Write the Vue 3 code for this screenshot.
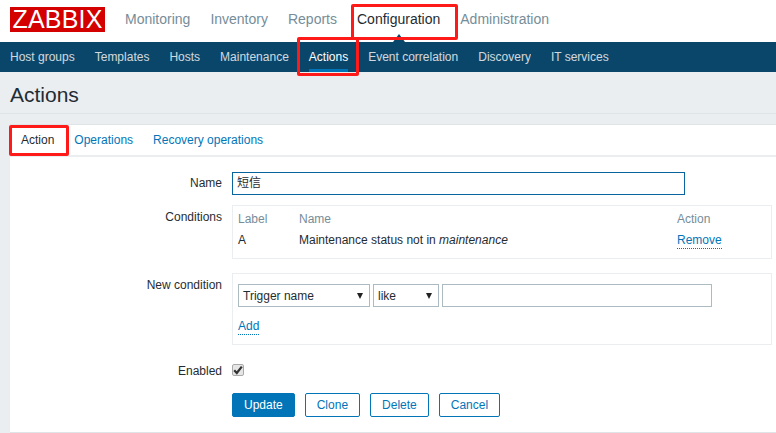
<script setup>
const mainMenu = ['Monitoring', 'Inventory', 'Reports', 'Configuration', 'Administration']
const subMenu = ['Host groups', 'Templates', 'Hosts', 'Maintenance', 'Actions', 'Event correlation', 'Discovery', 'IT services']
const tabs = ['Action', 'Operations', 'Recovery operations']
const buttons = ['Clone', 'Delete', 'Cancel']
</script>

<template>
  <div class="page">
    <header class="top">
      <div class="logo">ZABBIX</div>
      <nav class="main-menu">
        <a v-for="m in mainMenu" :key="m" :class="{ on: m === 'Configuration' }">{{ m }}</a>
      </nav>
    </header>
    <nav class="sub-menu">
      <a v-for="s in subMenu" :key="s" :class="{ on: s === 'Actions' }">{{ s }}</a>
    </nav>
    <h1 class="title">Actions</h1>

    <section class="card">
      <div class="tabs">
        <a v-for="t in tabs" :key="t" :class="{ on: t === 'Action' }">{{ t }}</a>
      </div>

      <div class="form">
        <div class="row row-name">
          <label>Name</label>
          <div class="input name-input">短信</div>
        </div>

        <div class="row row-cond">
          <label>Conditions</label>
          <div class="box cond-box">
            <div class="cond-line head"><span>Label</span><span>Name</span><span>Action</span></div>
            <div class="cond-line">
              <span>A</span>
              <span>Maintenance status not in <i>maintenance</i></span>
              <span><a class="link">Remove</a></span>
            </div>
          </div>
        </div>

        <div class="row row-new">
          <label>New condition</label>
          <div class="box new-box">
            <div class="fields">
              <div class="input select sel-a">Trigger name<span class="arrow"></span></div>
              <div class="input select sel-b">like<span class="arrow"></span></div>
              <div class="input text-field"></div>
            </div>
            <a class="link add">Add</a>
          </div>
        </div>

        <div class="row row-enabled">
          <label>Enabled</label>
          <div class="check">
            <svg width="10" height="10" viewBox="0 0 10 10"><path d="M1.2 5.2 L3.8 8 L8.8 1.6" fill="none" stroke="#333" stroke-width="2.2" /></svg>
          </div>
        </div>

        <div class="row row-btn">
          <span></span>
          <div class="btns">
            <button class="primary">Update</button>
            <button v-for="b in buttons" :key="b">{{ b }}</button>
          </div>
        </div>
      </div>
    </section>

    <!-- anotaciones rojas sobre la captura -->
    <div class="mark mark-config"></div>
    <div class="mark mark-actions"></div>
    <div class="mark mark-tab"></div>
  </div>
</template>

<style>
html, body { margin: 0; background: #ebeef0; overflow: hidden; }
</style>

<style scoped>
.page {
  position: relative;
  width: 776px;
  height: 433px;
  overflow: hidden;
  background: #ebeef0;
  font-family: "Liberation Sans", Arial, "Noto Sans CJK SC", sans-serif;
  font-size: 12px;
  color: #1f2c33;
}
.top {
  height: 42px;
  background: #fff;
  display: flex;
  align-items: flex-start;
  padding-left: 10px;
  box-sizing: border-box;
}
.logo {
  width: 95px;
  height: 25px;
  margin-top: 7px;
  background: #d40000;
  color: #fff;
  font-size: 25px;
  line-height: 25px;
  text-align: center;
  letter-spacing: 0.2px;
}
.main-menu {
  display: flex;
  margin-left: 10px;
  padding-top: 11px;
}
.main-menu a {
  position: relative;
  padding: 0 10px;
  font-size: 14px;
  line-height: 16px;
  color: #768d99;
  height: 31px;
}
.main-menu a.on { color: #1f2c33; }
.main-menu a.on::after {
  content: '';
  position: absolute;
  left: 50%;
  bottom: 0;
  margin-left: -6px;
  border: 6px solid transparent;
  border-top: 0;
  border-bottom: 8px solid #0a466a;
}
.sub-menu {
  height: 30px;
  background: #0a466a;
  display: flex;
}
.sub-menu a {
  position: relative;
  padding: 0 10px;
  line-height: 30px;
  color: #f2f2f2;
  opacity: 0.85;
}
.sub-menu a.on { color: #fff; opacity: 1; }
.sub-menu a.on::after {
  content: '';
  position: absolute;
  left: 10px;
  right: 10px;
  bottom: 0;
  height: 3px;
  background: #0275b8;
}
.title {
  margin: 0 0 10px;
  height: 41px;
  padding-left: 10px;
  border-bottom: 1px solid #dfe4e7;
  font-size: 21px;
  font-weight: normal;
  line-height: 45px;
  color: #1f2c33;
}
.card {
  margin-left: 10px;
  background: #fff;
  border-top: 1px solid #dfe4e7;
  height: 309px;
  border-bottom: 1px solid #dfe4e7;
  box-sizing: border-box;
}
.tabs {
  display: flex;
  height: 30px;
  padding-left: 1px;
  border-bottom: 2px solid #ebeef0;
}
.tabs a {
  padding: 0 10px;
  line-height: 30px;
  color: #0275b8;
}
.tabs a.on { color: #1f2c33; }
.form { padding-top: 15px; }
.row {
  display: grid;
  grid-template-columns: 212px 1fr;
  column-gap: 10px;
  margin-right: 4px;
}
.row label { text-align: right; line-height: 23px; }
.row-cond { margin-top: 10px; }
.row-cond label { line-height: 24px; }
.row-new { margin-top: 14px; }
.row-new label { line-height: 25px; }
.row-enabled { margin-top: 15px; height: 20px; }
.row-enabled label { line-height: 22px; }
.row-btn { margin-top: 13px; }
.input {
  box-sizing: border-box;
  height: 23px;
  border: 1px solid #acbbc2;
  background: #fff;
  line-height: 21px;
  padding-left: 4px;
}
.name-input { width: 453px; border-color: #0a64a0; }
.box {
  box-sizing: border-box;
  border: 1px solid #ebeef0;
  padding: 3px 5px;
}
.cond-box { height: 54px; }
.cond-line {
  display: grid;
  grid-template-columns: 61px 378px 1fr;
  height: 21px;
  line-height: 21px;
}
.cond-line.head { color: #768d99; }
.link {
  color: #0275b8;
  border-bottom: 1px dotted #0275b8;
  padding-bottom: 1px;
}
.new-box { height: 72px; padding-top: 10px; }
.fields { display: flex; gap: 3px; }
.select { position: relative; line-height: 23px; }
.sel-a { width: 132px; }
.sel-b { width: 66px; }
.text-field { width: 270px; }
.arrow {
  position: absolute;
  right: 6px;
  top: 8px;
  border: 3px solid transparent;
  border-top: 6px solid #222;
  border-bottom: 0;
}
.add { display: inline-block; margin-top: 12px; line-height: 14px; }
.check {
  box-sizing: border-box;
  width: 12px;
  height: 12px;
  margin-top: 4px;
  border: 1px solid #a9a9a9;
  border-radius: 2px;
  background: #e6e6e6;
  display: flex;
  align-items: center;
  justify-content: center;
}
.btns { display: flex; gap: 10px; }
button {
  height: 24px;
  padding: 0 11px;
  border: 1px solid #0275b8;
  border-radius: 2px;
  background: #fff;
  color: #0275b8;
  font: inherit;
}
button.primary { background: #0275b8; color: #fff; }
.mark {
  position: absolute;
  box-sizing: border-box;
  border: 3px solid #ff1a1a;
  border-radius: 2px;
}
.mark-config { left: 351px; top: 4px; width: 107px; height: 36px; }
.mark-actions { left: 297px; top: 37px; width: 62px; height: 39px; }
.mark-tab { left: 9px; top: 125px; width: 60px; height: 31px; }
</style>
